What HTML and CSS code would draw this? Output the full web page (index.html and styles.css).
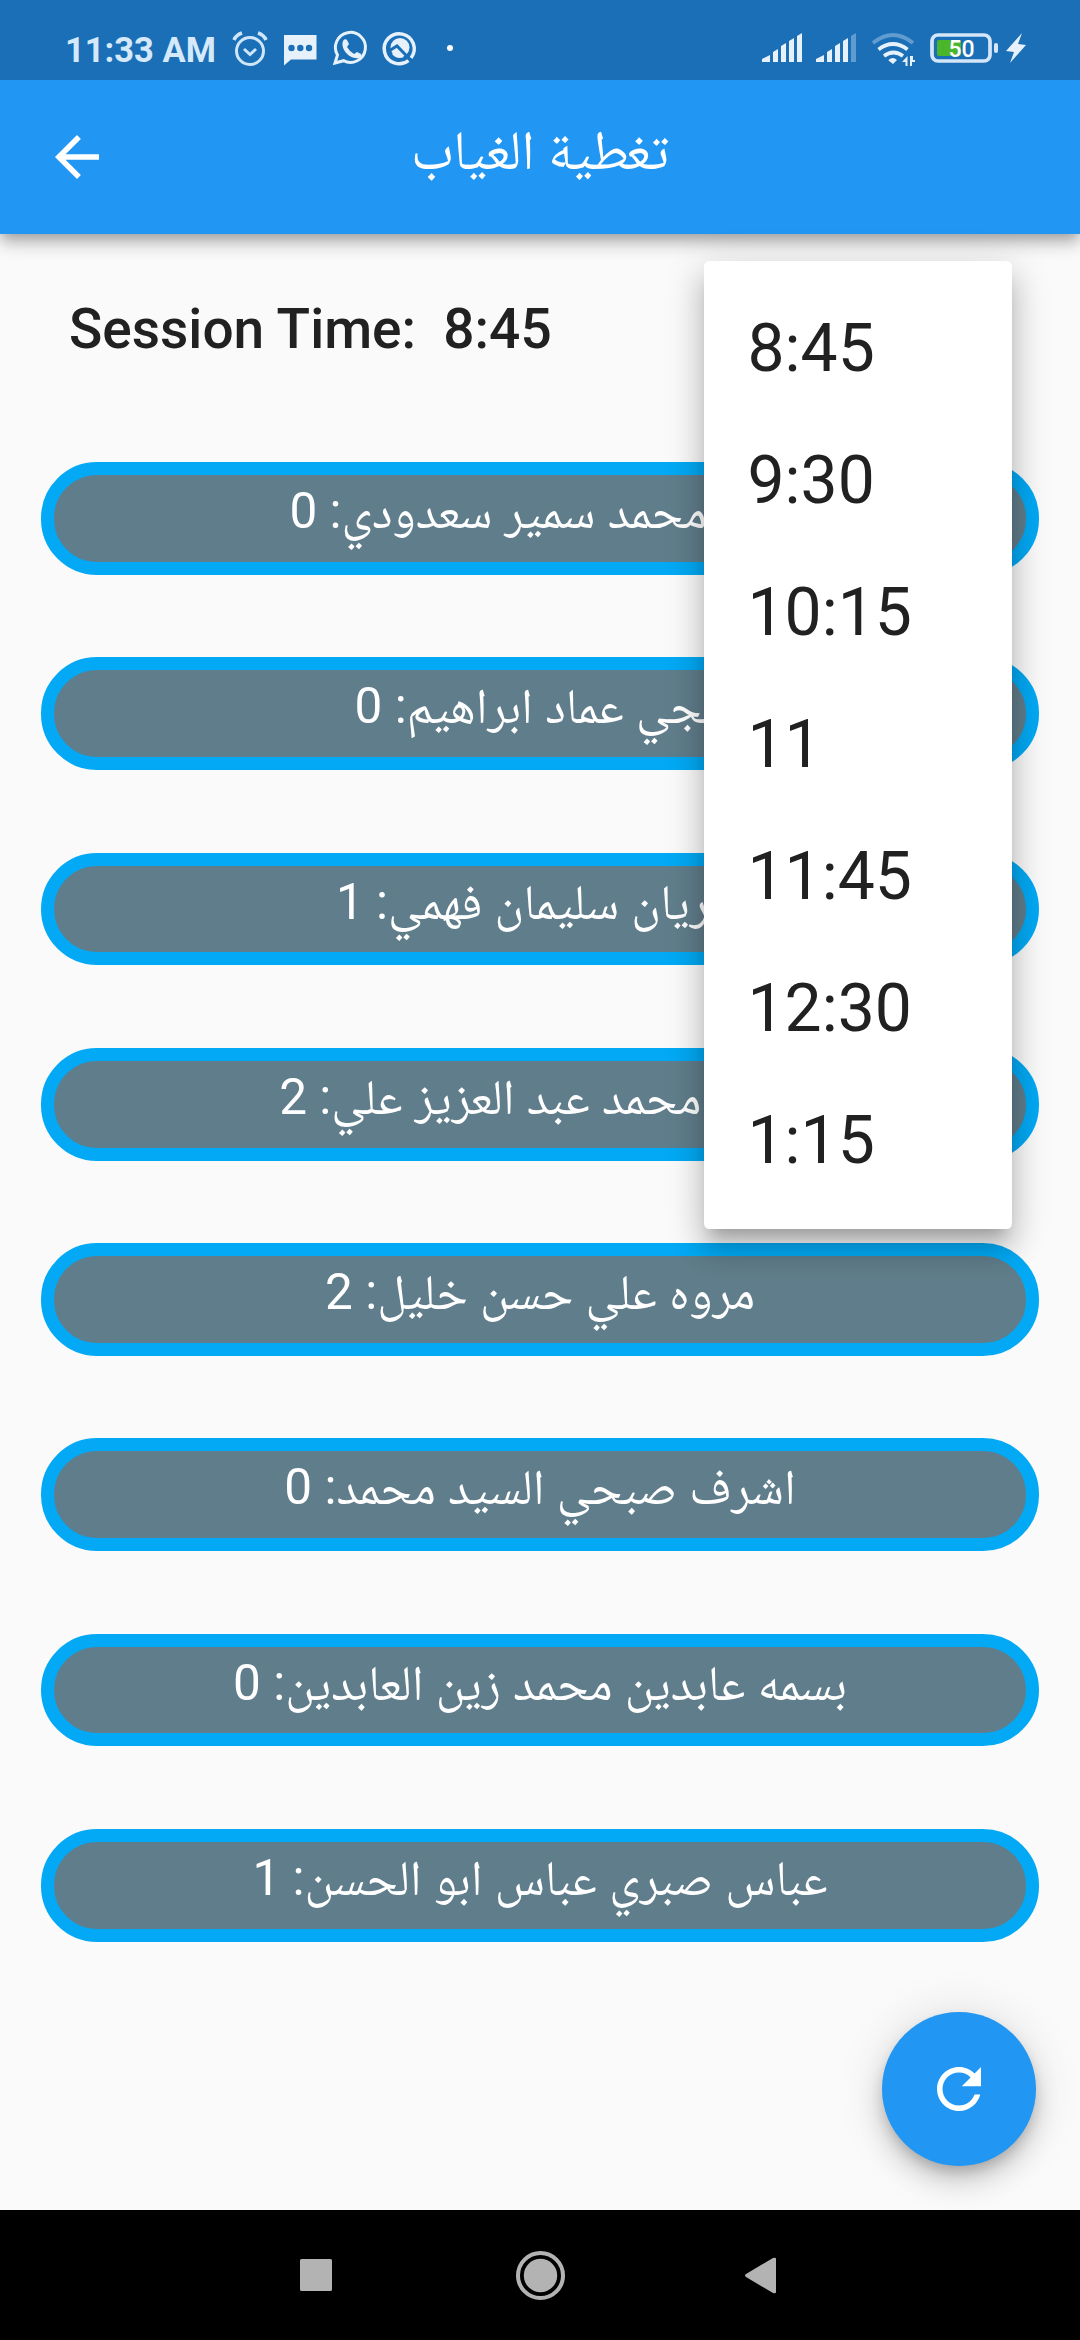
FILE: index.html
```html
<!DOCTYPE html>
<html lang="ar">
<head>
<meta charset="utf-8">
<title>تغطية الغياب</title>
<link rel="stylesheet" href="styles.css">
</head>
<body>
<div class="screen">
  <header class="status">
    <span class="clock">11:33 AM</span>
    <svg class="notes" viewBox="0 0 240 40" fill="none" stroke="#e6f1fb" stroke-width="3">
      <circle cx="18" cy="22" r="13.500" stroke="#cfe6f9"/><path d="M12 20l6 5.500 6-5.500" stroke="#cfe6f9"/><path d="M2 11Q4 6 10 4M34 11Q32 6 26 4" stroke="#cfe6f9" stroke-width="3.500"/>
      <path d="M52 6h32.500v24.500h-25.500l-7 6z" fill="#e6f1fb" stroke="none"/><g fill="#1a6fb7" stroke="none"><circle cx="59.500" cy="19" r="3.200"/><circle cx="68.300" cy="19" r="3.200"/><circle cx="77" cy="19" r="3.200"/></g>
      <path d="M103 34l2.500-8a15 15 0 1 1 6 5.700z"/><path d="M111 12c1-2 3-2 4-1l2 4-2 3q3 5 7 7l3-2 4 2q1 3-2 4c-9 2-19-9-16-17z" fill="#e6f1fb" stroke="none"/>
      <path d="M176.500 31.500a15 15 0 1 1 2.500-2.500" stroke-width="3.500"/><circle cx="168" cy="18.500" r="9.500" fill="#e6f1fb" stroke="none"/><path d="M156 22.500l9-5.500 15 15.500" stroke="#1a6fb7" stroke-width="3"/><path d="M160 25l5-4 7 7q-7 3-12-3z" fill="#e6f1fb" stroke="none"/>
      <circle cx="218" cy="19" r="3" fill="#fff" stroke="none"/>
    </svg>
    <svg class="signals" viewBox="0 0 270 40">
      <g fill="#e6f1fb">
        <path d="M1 33v-3l8-4v7zM12 33V23l5-3v13zM20 33V17l5-3v19zM28 33V12l5-3v24zM36 33V7l5-3v29z"/>
        <path d="M55 33v-3l8-4v7zM66 33V23l5-3v13zM74 33V17l5-3v19zM82 33V12l5-3v24z"/>
        <path d="M90 33V7l5-3v29z" opacity=".35"/>
        <path d="M127.500 31.500l4.500 3.500 4-4q-4-4-8.500 0zM146.500 27v10h-2v-4h-3.500zM149 27v10h2v-4h3V31h-2v-4z"/>
      </g>
      <g fill="none" stroke="#e6f1fb" stroke-width="3.700">
        <path d="M112 14q20-16 40 0" opacity=".35"/><path d="M117.500 20.500q14.500-11 29 0M123 27q9.500-7 19 0"/>
        <rect x="171" y="6" width="58" height="26" rx="6" stroke="#d5e6f8"/>
      </g>
      <rect x="176" y="11" width="24" height="16" rx="2" fill="#4bb52c"/>
      <rect x="233" y="14" width="4" height="10" rx="2" fill="#d5e6f8"/>
      <path d="M261 4l-16 18 8 1-4 11 16-18-8-1z" fill="#e6f1fb"/>
      <text class="level" x="200.500" y="27.500" text-anchor="middle">50</text>
    </svg>
  </header>
  <div class="appbar">
    <svg class="back" viewBox="0 0 24 24"><path fill="#fff" d="M20 11H7.830l5.590-5.590L12 4l-8 8 8 8 1.410-1.410L7.830 13H20v-2z"/></svg>
    <h1 class="title" dir="rtl">تغطية الغياب</h1>
  </div>
  <main class="content">
    <p class="session">Session Time:&nbsp; 8:45</p>
    <ul class="teachers" dir="rtl">
      <li class="teacher">علي محمد سمير سعدودي: 0</li>
      <li class="teacher">مجي عماد ابراهيم: 0</li>
      <li class="teacher">ماريان سليمان فهمي: 1</li>
      <li class="teacher">احمد محمد عبد العزيز علي: 2</li>
      <li class="teacher">مروه علي حسن خليل: 2</li>
      <li class="teacher">اشرف صبحي السيد محمد: 0</li>
      <li class="teacher">بسمه عابدين محمد زين العابدين: 0</li>
      <li class="teacher">عباس صبري عباس ابو الحسن: 1</li>
    </ul>
  </main>
  <nav class="navbar">
    <svg viewBox="0 0 560 130" fill="#b3b3b3"><rect x="40" y="49" width="32" height="32" rx="1.500"/><circle cx="280.500" cy="65.500" r="16.700"/><circle cx="280.500" cy="65.500" r="22.500" fill="none" stroke="#b3b3b3" stroke-width="4"/><path d="M486 64l27-16q3-1 3 1v33q0 2-3 1l-27-16q-2-1.500 0-3z"/></svg>
  </nav>
  <ul class="menu">
    <li>8:45</li><li>9:30</li><li>10:15</li><li>11</li><li>11:45</li><li>12:30</li><li>1:15</li>
  </ul>
  <button class="fab"><svg viewBox="0 0 24 24"><path fill="#fff" d="M17.650 6.350C16.200 4.900 14.210 4 12 4c-4.420 0-7.990 3.580-7.990 8s3.570 8 7.990 8c3.730 0 6.840-2.550 7.730-6h-2.080c-.820 2.330-3.040 4-5.650 4-3.310 0-6-2.690-6-6s2.690-6 6-6c1.660 0 3.140.690 4.220 1.780L13 11h7V4l-2.350 2.350z"/></svg></button>
</div>
</body>
</html>
```
FILE: styles.css
```css
* { box-sizing: border-box; margin: 0; padding: 0; }
body { background: #fafafa; font-family: Roboto, "Noto Naskh Arabic", "Noto Naskh Arabic UI", "Noto Sans Arabic", "DejaVu Sans", sans-serif; }
.screen { position: relative; width: 1080px; height: 2340px; display: flex; flex-direction: column; overflow: hidden; }
.status { flex: none; height: 80px; background: #1a6fb7; display: flex; align-items: center; padding: 20px 49px 0 65px; }
.clock { color: #d5e9fa; font-size: 34.500px; font-weight: 700; line-height: 60px; width: 167px; white-space: nowrap; }
.notes { width: 240px; height: 40px; margin-top: -2px; }
.signals { width: 270px; height: 40px; margin-left: auto; margin-top: -2px; }
.level { font-size: 23px; font-weight: 500; fill: #fff; }
.appbar { flex: none; height: 154px; background: #2196f3; display: flex; align-items: center; justify-content: center; position: relative; box-shadow: 0 6px 11px -3px rgba(0,0,0,.2), 0 11px 14px rgba(0,0,0,.14), 0 3px 27px rgba(0,0,0,.12); clip-path: inset(0 0 -60px); }
.back { position: absolute; left: 44px; top: 44px; width: 66px; height: 66px; }
.title { color: #fff; font-size: 55px; font-weight: 400; line-height: 66px; padding-bottom: 15px; }
.content { flex: 1; padding: 0 41px; }
.session { padding: 62px 28px 0; height: 228px; font-size: 55px; font-weight: 500; line-height: 66px; color: #212121; }
.teachers { list-style: none; display: flex; flex-direction: column; gap: 82.500px; }
.teacher { height: 112.750px; border: 13.750px solid #03a9f4; border-radius: 56px; background: #607d8b; color: #fff; font-size: 49.500px; line-height: 73px; text-align: center; white-space: nowrap; }
.navbar { flex: none; height: 130px; background: #000; display: flex; justify-content: center; }
.navbar svg { width: 560px; height: 130px; }
.menu { position: absolute; left: 703.500px; top: 261.250px; width: 308px; height: 968px; padding: 22px 44px; list-style: none; background: #fff; border-radius: 5.500px; color: #212121; font-size: 66px; line-height: 132px; box-shadow: 0 14px 14px -8px rgba(0,0,0,.2), 0 22px 28px 3px rgba(0,0,0,.14), 0 8px 38px 5px rgba(0,0,0,.12); }
.fab { position: absolute; left: 882px; top: 2011.500px; width: 154px; height: 154px; border: 0; border-radius: 50%; background: #2196f3; display: flex; align-items: center; justify-content: center; box-shadow: 0 8px 14px -3px rgba(0,0,0,.2), 0 16px 27px rgba(0,0,0,.14), 0 3px 50px rgba(0,0,0,.12); }
.fab svg { width: 66px; height: 66px; }
```
